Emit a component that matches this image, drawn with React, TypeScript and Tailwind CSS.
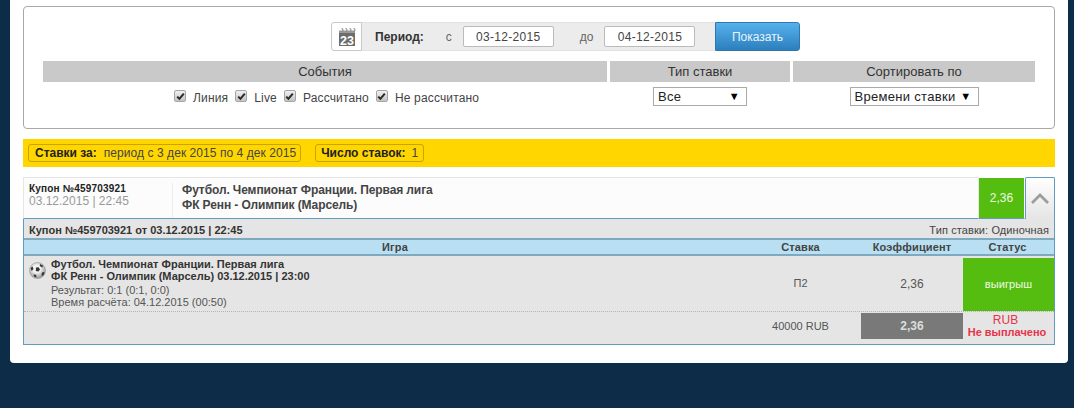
const CheckItem = ({ label }: { label: string }) => (
  <span className="flex items-center">
    <span className="flex h-[12px] w-[12px] items-center justify-center rounded-[2px] border border-[#a5a5a5] bg-gradient-to-b from-[#f0f0f0] to-[#c4c4c4]">
      <svg width="9" height="9" viewBox="0 0 9 9">
        <path d="M1.2 4.6 L3.4 6.8 L7.8 1.6" fill="none" stroke="#2a2a2a" strokeWidth="2" />
      </svg>
    </span>
    <span className="ml-[7px] mr-[7px] mt-[3px] tracking-[0.16px]">{label}</span>
  </span>
);

const CalendarIcon = () => (
  <svg width="20" height="20" viewBox="0 0 20 20">
    <path d="M2 6h16v13H2z" fill="#6c6c6c" />
    <path d="M2 3.5h16V6H2z" fill="#9a9a9a" />
    <path d="M4.5 1.5a1.2 1.2 0 0 1 0 3M8.5 1.5a1.2 1.2 0 0 1 0 3M12.5 1.5a1.2 1.2 0 0 1 0 3M16.5 1.5a1.2 1.2 0 0 1 0 3" stroke="#8a8a8a" strokeWidth="1.1" fill="none" />
    <text x="10" y="17.6" textAnchor="middle" fontSize="12.5" fontWeight="700" fill="#fff" fontFamily="Liberation Sans">23</text>
  </svg>
);

const BallIcon = () => (
  <svg width="17" height="17" viewBox="0 0 17 17">
    <defs>
      <radialGradient id="ball" cx="0.45" cy="0.4" r="0.65">
        <stop offset="0.35" stopColor="#f2f2f2" />
        <stop offset="1" stopColor="#8c8c8c" />
      </radialGradient>
    </defs>
    <circle cx="8.5" cy="8.5" r="8" fill="url(#ball)" stroke="#8a8a8a" strokeWidth="0.5" />
    <path d="M7 5.6l2.6-.4 1.4 2.2-1.6 2.2-2.6-.6z" fill="#333" />
    <path d="M1.5 6l2-1.6 1 2.6-1.8 2zM11 2l3 1.8-.6 1.6-2.6-1.4zM13 10.5l2.6-.6-1 3.4-2.2.4zM4.5 12.4l2.6.4.4 2.6-2.4-.8z" fill="#333" />
  </svg>
);

const Select = ({ value, width }: { value: string; width: string }) => (
  <div className={`mt-[1px] flex h-[19px] items-center justify-between border border-[#aaa] bg-white pl-[4px] pr-[6px] text-[13px] text-[#222] tracking-[0.3px] ${width}`}>
    <span>{value}</span>
    <span className="text-[11px] leading-none text-black">▼</span>
  </div>
);

export default function App() {
  return (
    <div className="h-[408px] w-[1074px] overflow-hidden bg-[#0d2c48] pl-[10px] font-['Liberation_Sans',Arial,sans-serif] text-[12px] text-[#333]">
      <div className="h-[363px] w-[1058px] rounded-b-[4px] bg-white px-[13px] pt-[6px]">
        {/* filters */}
        <div className="h-[123px] w-[1032px] rounded-[4px] border border-[#a8a8a8] pt-[15px]">
          <div className="ml-[307px] flex h-[29px] w-[469px]">
            <div className="flex w-[31px] items-center justify-center rounded-l-[3px] border border-[#c8c8c8]">
              <CalendarIcon />
            </div>
            <div className="flex w-[353px] items-center border-y border-[#e2e2e2] bg-[#ececec]">
              <span className="ml-[13px] font-bold text-[#333]">Период:</span>
              <span className="ml-[22px] text-[#666]">с</span>
              <div className="ml-[11px] flex h-[21px] w-[91px] items-center justify-center rounded-[2px] border border-[#bbb] bg-white tracking-[0.3px] text-[#444]">03-12-2015</div>
              <span className="ml-[26px] text-[#666]">до</span>
              <div className="ml-[11px] flex h-[21px] w-[91px] items-center justify-center rounded-[2px] border border-[#bbb] bg-white tracking-[0.3px] text-[#444]">04-12-2015</div>
            </div>
            <div className="flex w-[85px] items-center justify-center rounded-r-[3px] border border-[#2f78ad] bg-gradient-to-b from-[#56b1ec] to-[#2c7fbd] text-[#e8f4fc]">Показать</div>
          </div>
          <div className="ml-[19px] mt-[10px] flex gap-[3px] text-[13px]">
            <div className="flex h-[21px] w-[564px] items-center justify-center bg-[#c9c9c9]">События</div>
            <div className="flex h-[21px] w-[180px] items-center justify-center bg-[#c9c9c9]">Тип ставки</div>
            <div className="flex h-[21px] w-[242px] items-center justify-center bg-[#c9c9c9]">Сортировать по</div>
          </div>
          <div className="ml-[19px] mt-[4px] flex gap-[3px]">
            <div className="flex h-[20px] w-[564px] items-center pl-[131px] text-[#444]">
              <CheckItem label="Линия" />
              <CheckItem label="Live" />
              <CheckItem label="Рассчитано" />
              <CheckItem label="Не рассчитано" />
            </div>
            <div className="flex w-[180px] justify-center">
              <Select value="Все" width="w-[94px]" />
            </div>
            <div className="flex w-[242px] justify-center">
              <Select value="Времени ставки" width="w-[129px]" />
            </div>
          </div>
        </div>

        {/* summary */}
        <div className="mt-[10px] flex h-[28px] w-[1032px] items-center gap-[14px] bg-[#ffd600] pl-[5px] text-[#444]">
          <div className="flex h-[18px] items-center rounded-[3px] border border-[#c9a400] pl-[6px] pr-[4px]">
            <b className="mr-[7px] text-[#222]">Ставки за:</b>
            <span className="tracking-[0.06px]">период с 3 дек 2015 по 4 дек 2015</span>
          </div>
          <div className="flex h-[18px] items-center rounded-[3px] border border-[#c9a400] px-[5px]">
            <b className="mr-[6px] text-[#222]">Число ставок:</b>1
          </div>
        </div>

        {/* coupon row */}
        <div className="mt-[10px] flex h-[42px] w-[1032px]">
          <div className="flex w-[956px] border-x border-t border-b border-x-[#e6e6e6] border-t-[#e6e6e6] border-b-[#5f9dbf] bg-[#fcfcfc] pt-[5px]">
            <div className="w-[148px] pl-[5px]">
              <div className="text-[10px] font-bold leading-[12px] tracking-[0.2px] text-[#222]">Купон №459703921</div>
              <div className="text-[12px] leading-[13px] text-[#999]">03.12.2015 | 22:45</div>
            </div>
            <div className="border-l border-[#eeeeee] pl-[9px] text-[12px] font-bold leading-[15px] tracking-[-0.1px] text-[#444]">
              <div>Футбол. Чемпионат Франции. Первая лига</div>
              <div>ФК Ренн - Олимпик (Марсель)</div>
            </div>
          </div>
          <div className="flex w-[46px] items-center justify-center border-t border-r border-b border-t-white border-r-white border-b-[#5f9dbf] bg-[#55bd10] text-[#eef9e0]">2,36</div>
          <div className="flex w-[30px] items-center justify-center rounded-t-[2px] border border-b-0 border-[#5f9dbf] bg-gradient-to-b from-white to-[#e5e5e5]">
            <svg width="18" height="11" viewBox="0 0 18 11">
              <path d="M1 10L9 2l8 8" fill="none" stroke="#9c9c9c" strokeWidth="2.8" />
            </svg>
          </div>
        </div>

        {/* coupon details */}
        <div className="h-[126px] w-[1032px] border border-t-0 border-[#5f9dbf] bg-[#e5e5e5]">
          <div className="flex h-[19px] items-center justify-between pl-[5px] pr-[5px] pt-[3px]">
            <b className="text-[11px] text-[#333]">Купон №459703921 от 03.12.2015 | 22:45</b>
            <span className="text-[11px] tracking-[0.1px] text-[#444]">Тип ставки: Одиночная</span>
          </div>
          <div className="flex h-[18px] items-center border-y-2 border-[#7fa9bf] bg-[#b9dff2] text-[11px] font-bold tracking-[0.15px] text-[#444]">
            <div className="w-[716px] pl-[26px] text-center">Игра</div>
            <div className="w-[121px] text-center">Ставка</div>
            <div className="w-[102px] text-center">Коэффициент</div>
            <div className="w-[91px] pr-[2px] text-center">Статус</div>
          </div>
          <div className="flex h-[56px] border-b border-dotted border-[#b4b4b4] text-[11px]">
            <div className="flex w-[716px] pl-[5px] pt-[2px]">
              <div className="mt-[4px]"><BallIcon /></div>
              <div className="ml-[5px] leading-[12px] text-[#555]">
                <b className="block text-[11px] text-[#333]">Футбол. Чемпионат Франции. Первая лига</b>
                <b className="block text-[11px] text-[#333]">ФК Ренн - Олимпик (Марсель) 03.12.2015 | 23:00</b>
                <div className="mt-[2px]">Результат: 0:1 (0:1, 0:0)</div>
                <div>Время расчёта: 04.12.2015 (00:50)</div>
              </div>
            </div>
            <div className="flex w-[121px] items-center justify-center text-[#555]">П2</div>
            <div className="flex w-[102px] items-center justify-center text-[12px] text-[#555]">2,36</div>
            <div className="mt-[2px] flex h-[53px] w-[91px] items-center justify-center bg-[#55bd10] text-[11px] font-medium tracking-[0.1px] text-[#f0fbe4]">выигрыш</div>
          </div>
          <div className="flex items-center pt-[1px] text-[11px]">
            <div className="w-[716px]" />
            <div className="w-[121px] text-center text-[#555]">40000 RUB</div>
            <div className="flex h-[26px] w-[102px] items-center justify-center bg-[#797979] text-[12px] font-bold text-[#ddd]">2,36</div>
            <div className="w-[91px] pr-[3px] text-center text-[11px] leading-[12px] text-[#e8334a]">
              <div className="pr-[3px] text-[12px]">RUB</div>
              <div className="font-bold">Не выплачено</div>
            </div>
          </div>
        </div>
      </div>
    </div>
  );
}
